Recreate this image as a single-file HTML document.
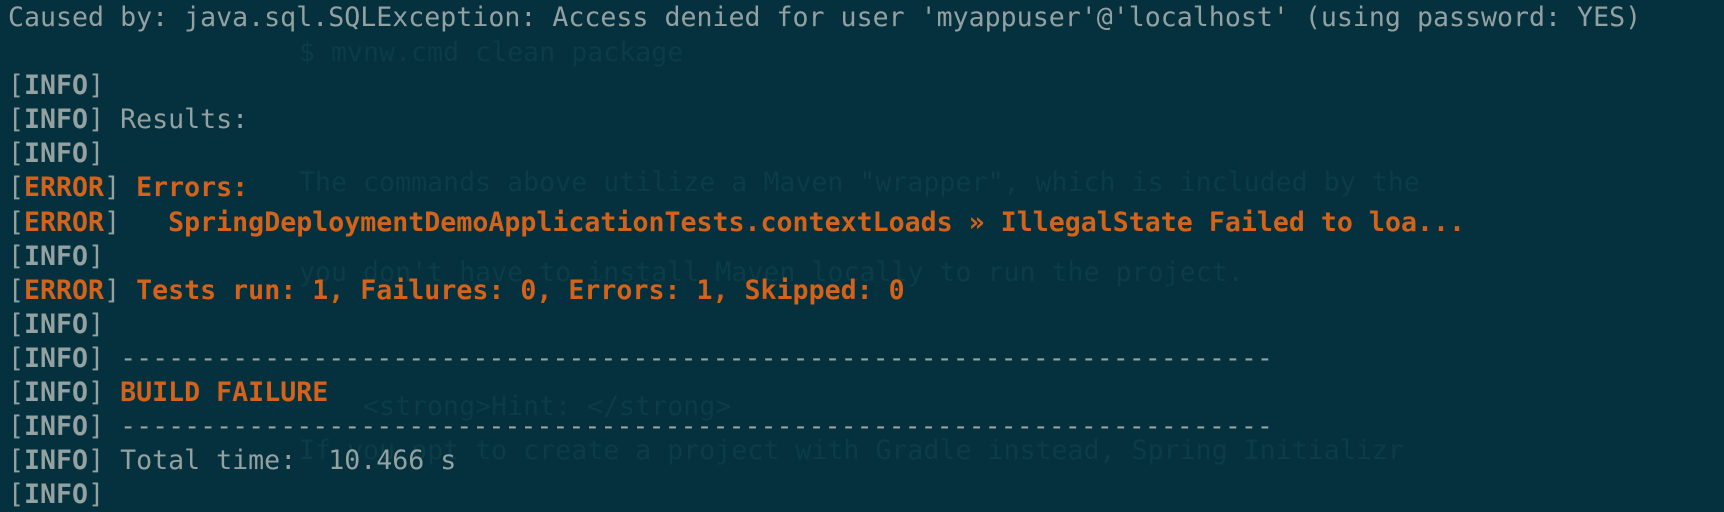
<!DOCTYPE html>
<html><head><meta charset="utf-8"><style>
html,body{margin:0;padding:0;}
body{width:1724px;height:484px;overflow:hidden;background:#04313d;position:relative;font-family:"DejaVu Sans Mono","Liberation Mono",monospace;}
.g{position:absolute;color:#0b3c48;font-size:26.6px;white-space:pre;line-height:34px;}
.t{position:absolute;left:8px;top:1px;font-size:26.6px;line-height:34.1px;color:#93a1a1;white-space:pre;}
b{font-weight:bold;}
.o{color:#d3621a;font-weight:bold;}
</style></head><body>
<div class="g" style="left:299px;top:36px">$ mvnw.cmd clean package</div>
<div class="g" style="left:299px;top:166px">The commands above utilize a Maven "wrapper", which is included by the</div>
<div class="g" style="left:299px;top:256px">you don't have to install Maven locally to run the project.</div>
<div class="g" style="left:363px;top:390px">&lt;strong&gt;Hint: &lt;/strong&gt;</div>
<div class="g" style="left:299px;top:434px">If you opt to create a project with Gradle instead, Spring Initializr</div>
<div class="t">Caused by: java.sql.SQLException: Access denied for user 'myappuser'@'localhost' (using password: YES)

[<b>INFO</b>]
[<b>INFO</b>] Results:
[<b>INFO</b>]
[<span class="o">ERROR</span>] <span class="o">Errors:</span>
[<span class="o">ERROR</span>]   <span class="o">SpringDeploymentDemoApplicationTests.contextLoads » IllegalState Failed to loa...</span>
[<b>INFO</b>]
[<span class="o">ERROR</span>] <span class="o">Tests run: 1, Failures: 0, Errors: 1, Skipped: 0</span>
[<b>INFO</b>]
[<b>INFO</b>] ------------------------------------------------------------------------
[<b>INFO</b>] <span class="o">BUILD FAILURE</span>
[<b>INFO</b>] ------------------------------------------------------------------------
[<b>INFO</b>] Total time:  10.466 s
[<b>INFO</b>]</div>
</body></html>
